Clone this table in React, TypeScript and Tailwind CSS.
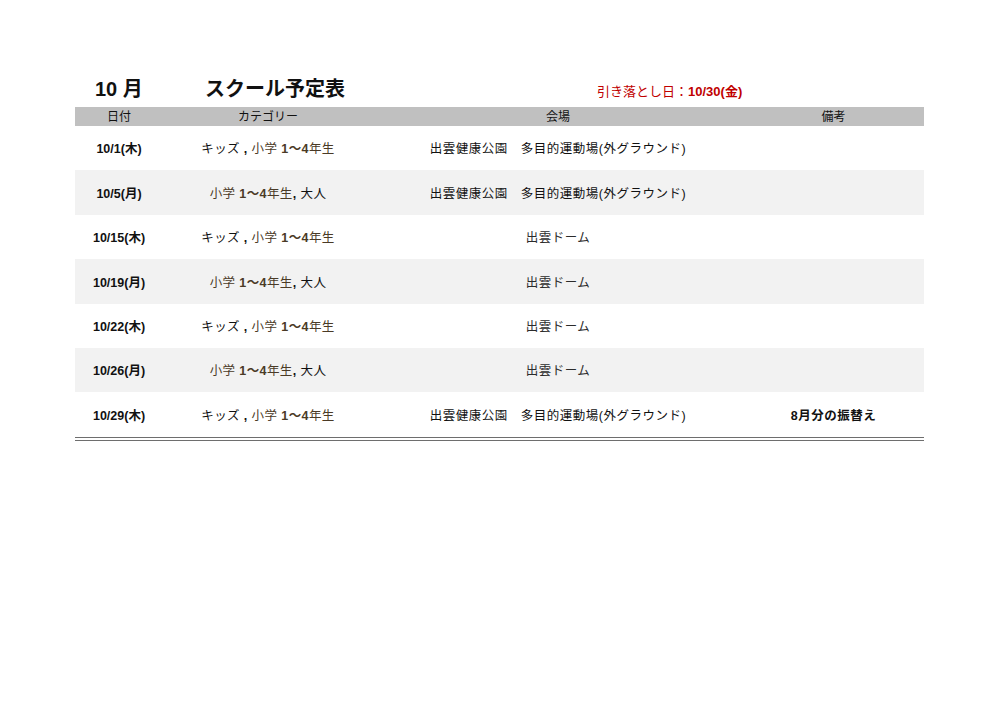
const rows = [
  { date: "10/1(木)", kids: true, venue: "出雲健康公園\u3000多目的運動場(外グラウンド)", note: "" },
  { date: "10/5(月)", kids: false, venue: "出雲健康公園\u3000多目的運動場(外グラウンド)", note: "" },
  { date: "10/15(木)", kids: true, venue: "出雲ドーム", note: "" },
  { date: "10/19(月)", kids: false, venue: "出雲ドーム", note: "" },
  { date: "10/22(木)", kids: true, venue: "出雲ドーム", note: "" },
  { date: "10/26(月)", kids: false, venue: "出雲ドーム", note: "" },
  { date: "10/29(木)", kids: true, venue: "出雲健康公園\u3000多目的運動場(外グラウンド)", note: "8月分の振替え" },
];

const Grade = () => (
  <span className="text-[#4a3a26]">
    小学 <span className="font-bold">1～4</span>年生
  </span>
);

export default function App() {
  return (
    <div className="w-[999px] h-[706px] bg-white text-[#111] font-['Liberation_Sans','Noto_Sans_CJK_JP',sans-serif]">
      <div className="pt-[73px] pl-[75px] w-[924px]">
        <div className="flex items-end h-[28px] pb-[2px]">
          <div className="w-[130px] pl-[20px] text-[20px] font-bold leading-none">10 月</div>
          <div className="w-[392px] text-[20px] font-bold leading-none">スクール予定表</div>
          <div className="text-[13px] text-[#c00000] leading-none pb-[1px]">
            引き落とし日：<span className="font-bold">10/30(金)</span>
          </div>
        </div>
        <div className="mt-[6px] w-[849px]">
          <div className="grid grid-cols-[88px_210px_370px_181px] h-[19px] bg-[#c0c0c0] text-[12px] items-center text-center leading-none pt-[1px]">
            <div>日付</div>
            <div>カテゴリー</div>
            <div>会場</div>
            <div>備考</div>
          </div>
          <div className="border-b-[4px] border-double border-[#6e6e6e]">
            {rows.map((r, i) => (
              <div
                key={r.date}
                className={`grid grid-cols-[88px_210px_370px_181px] h-[44.4px] items-center text-center text-[12.5px] leading-none pt-[3px] ${i % 2 === 1 ? "bg-[#f2f2f2]" : "bg-white"}`}
              >
                <div className="font-bold">{r.date}</div>
                <div className="tracking-[0.4px]">
                  {r.kids ? (
                    <>
                      キッズ<span className="font-bold"> , </span>
                      <Grade />
                    </>
                  ) : (
                    <>
                      <Grade />
                      <span className="font-bold">, </span>大人
                    </>
                  )}
                </div>
                <div className={`tracking-[0.5px] ${r.venue === "出雲ドーム" ? "text-[#2b2b2b]" : ""}`}>{r.venue}</div>
                <div className="font-bold tracking-[0.5px]">{r.note}</div>
              </div>
            ))}
          </div>
        </div>
      </div>
    </div>
  );
}
